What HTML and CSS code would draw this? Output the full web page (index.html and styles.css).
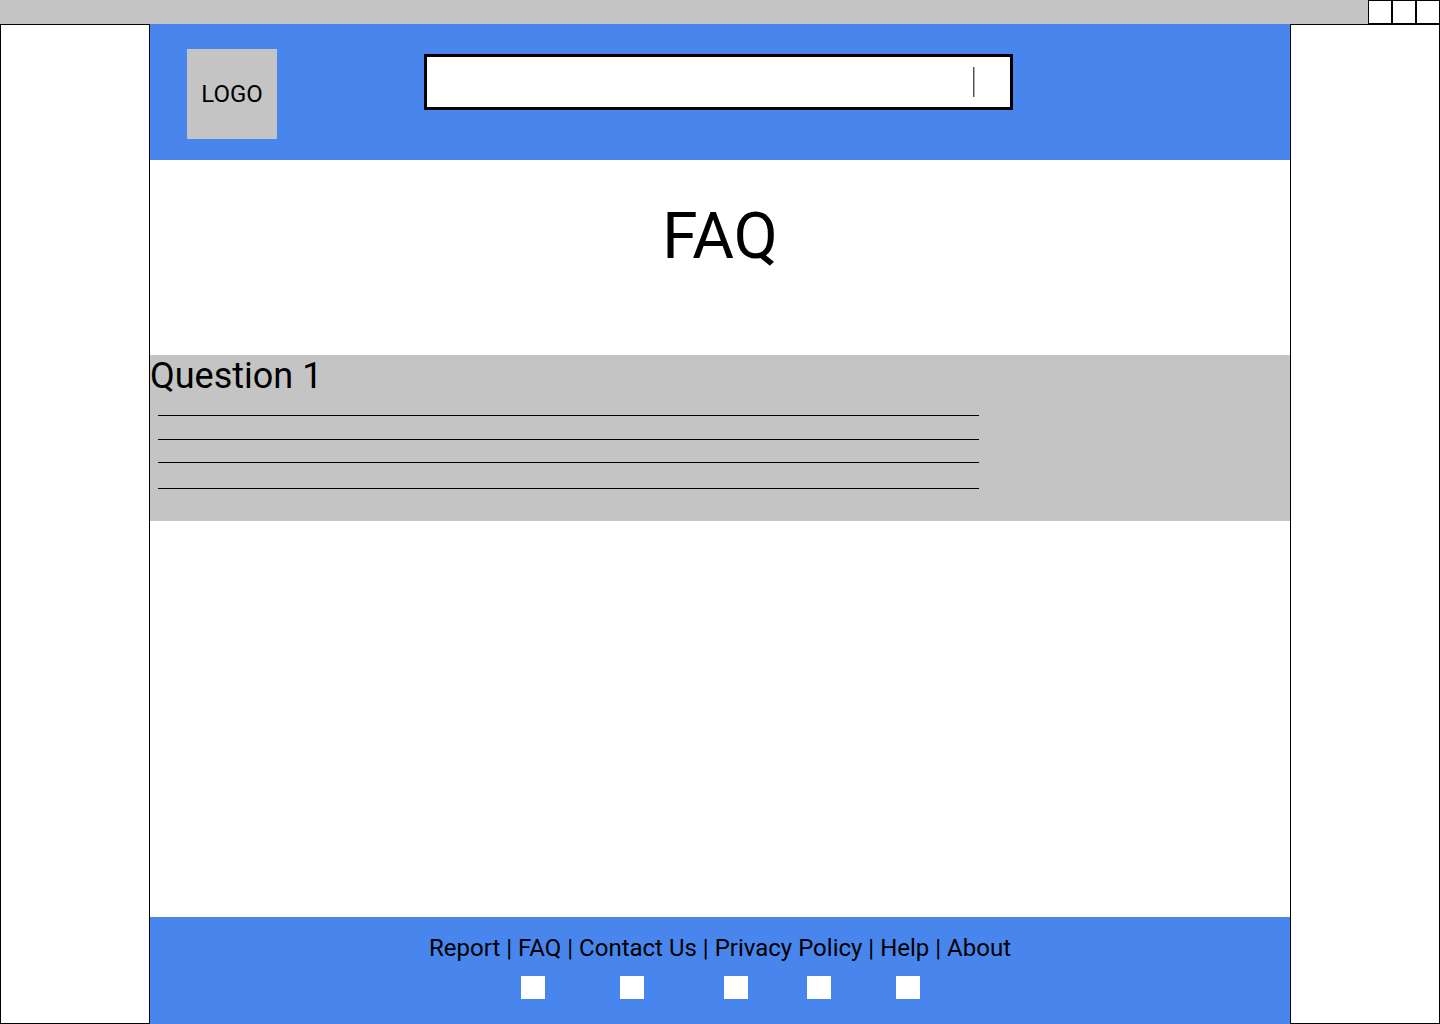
FILE: index.html
```html
<!DOCTYPE html>
<html lang="en">
<head>
<meta charset="utf-8">
<meta name="viewport" content="width=device-width, initial-scale=1">
<title>FAQ</title>
<link rel="stylesheet" href="styles.css">
</head>
<body>
<div class="titlebar">
  <button class="window-button" type="button" aria-label="Minimize"></button>
  <button class="window-button" type="button" aria-label="Maximize"></button>
  <button class="window-button" type="button" aria-label="Close"></button>
</div>
<div class="layout">
  <aside class="rail"></aside>
  <div class="page">
    <header class="header">
      <a class="logo" href="#">LOGO</a>
      <form class="search" role="search">
        <input class="search-input" type="text" aria-label="Search">
        <button class="search-button" type="submit" aria-label="Submit search"></button>
      </form>
    </header>
    <main class="main">
      <h1 class="title">FAQ</h1>
      <section class="question">
        <h2 class="question-title">Question 1</h2>
        <div class="answer">
          <div class="line"></div>
          <div class="line"></div>
          <div class="line"></div>
          <div class="line"></div>
        </div>
      </section>
    </main>
    <footer class="footer">
      <nav class="footer-nav"><a href="#">Report</a> | <a href="#">FAQ</a> | <a href="#">Contact Us</a> | <a href="#">Privacy Policy</a> | <a href="#">Help</a> | <a href="#">About</a></nav>
      <div class="socials">
        <a class="social" href="#" aria-label="Social link 1"></a>
        <a class="social" href="#" aria-label="Social link 2"></a>
        <a class="social" href="#" aria-label="Social link 3"></a>
        <a class="social" href="#" aria-label="Social link 4"></a>
        <a class="social" href="#" aria-label="Social link 5"></a>
      </div>
    </footer>
  </div>
  <aside class="rail"></aside>
</div>
</body>
</html>
```
FILE: styles.css
```css
* {
  box-sizing: border-box;
}

body {
  margin: 0;
  min-height: 100vh;
  display: flex;
  flex-direction: column;
  background: #fff;
  color: #000;
  font-family: Roboto, "Liberation Sans", sans-serif;
}

a {
  color: inherit;
  text-decoration: none;
}

.titlebar {
  display: flex;
  justify-content: flex-end;
  background: #c4c4c4;
}

.window-button {
  width: 24px;
  height: 24px;
  padding: 0;
  border: 1px solid #000;
  border-radius: 0;
  background: #fff;
}

.layout {
  flex: 1;
  display: grid;
  grid-template-columns: 150fr 1140fr 150fr;
}

.rail {
  border: 1px solid #000;
}

.page {
  min-width: 0;
  display: flex;
  flex-direction: column;
}

.header {
  display: grid;
  grid-template-columns: 274fr 589fr 277fr;
  align-items: start;
  padding: 25px 0 21px;
  background: #4886ed;
}

.logo {
  display: flex;
  align-items: center;
  justify-content: center;
  width: 90px;
  height: 90px;
  margin-left: 37px;
  background: #c4c4c4;
  font-size: 24px;
  line-height: 28px;
}

.search {
  display: flex;
  align-items: center;
  height: 56px;
  margin-top: 5px;
  border: 3px solid #000;
  background: #fff;
}

.search-input {
  flex: 1;
  min-width: 0;
  height: 50px;
  padding: 0 12px;
  border: 0;
  outline: 0;
  background: transparent;
  font: inherit;
  font-size: 24px;
}

.search-button {
  width: 37px;
  height: 30px;
  padding: 0;
  border: 0;
  border-left: 1px solid #555;
  background: #fff;
  box-shadow: inset 1px 0 #aaa;
}

.main {
  flex: 1;
}

.title {
  margin: 0;
  padding: 39px 0 81px;
  font-size: 64px;
  font-weight: 400;
  line-height: 75px;
  text-align: center;
}

.question {
  padding-bottom: 32px;
  background: #c4c4c4;
}

.question-title {
  margin: 0;
  font-size: 36px;
  font-weight: 400;
  line-height: 42px;
}

.answer {
  display: grid;
  grid-template-rows: 24px 23px 26px 1px;
  width: 72%;
  margin: 18px 0 0 8px;
}

.line {
  height: 1px;
  background: #000;
}

.footer {
  display: flex;
  flex-direction: column;
  align-items: center;
  gap: 14px;
  padding: 17px 0 25px;
  background: #4886ed;
}

.footer-nav {
  font-size: 24px;
  line-height: 28px;
  text-align: center;
}

.socials {
  display: grid;
  grid-template-columns: 99px 104px 83px 89px 24px;
}

.social {
  width: 24px;
  height: 23px;
  background: #fff;
}
```
